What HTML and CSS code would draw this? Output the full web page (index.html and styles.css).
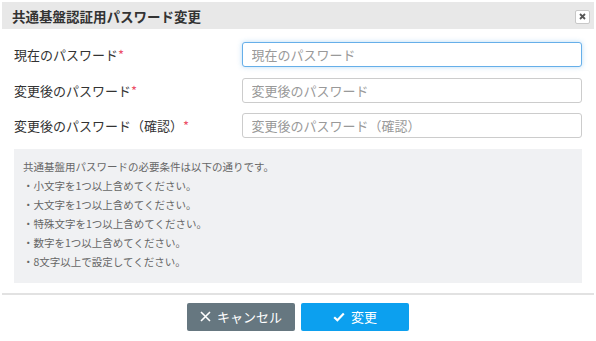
FILE: index.html
```html
<!DOCTYPE html>
<html lang="ja">
<head>
  <meta charset="UTF-8">
  <meta name="viewport" content="width=device-width, initial-scale=1.0">
  <title>共通基盤認証用パスワード変更</title>
  <link rel="stylesheet" href="styles.css">
</head>
<body>
  <div class="dialog">
    <div class="dialog-header">
      <span class="dialog-title">共通基盤認証用パスワード変更</span>
      <button class="close-button" type="button" title="閉じる">
        <svg width="7" height="7" viewBox="0 0 7 7"><path d="M1 1L6 6M6 1L1 6" stroke="#555" stroke-width="1.8"/></svg>
      </button>
    </div>
    <div class="dialog-body">
      <div class="form-row">
        <label for="currentPassword">現在のパスワード<span class="required">*</span></label>
        <input type="password" id="currentPassword" class="is-focus" placeholder="現在のパスワード" autofocus>
      </div>
      <div class="form-row">
        <label for="newPassword">変更後のパスワード<span class="required">*</span></label>
        <input type="password" id="newPassword" placeholder="変更後のパスワード">
      </div>
      <div class="form-row">
        <label for="confirmPassword">変更後のパスワード（確認）<span class="required">*</span></label>
        <input type="password" id="confirmPassword" placeholder="変更後のパスワード（確認）">
      </div>
      <div class="notice">
        <p>共通基盤用パスワードの必要条件は以下の通りです。</p>
        <p>・小文字を1つ以上含めてください。</p>
        <p>・大文字を1つ以上含めてください。</p>
        <p>・特殊文字を1つ以上含めてください。</p>
        <p>・数字を1つ以上含めてください。</p>
        <p>・8文字以上で設定してください。</p>
      </div>
    </div>
    <div class="dialog-footer">
      <button class="btn btn-cancel" type="button">
        <svg width="11" height="11" viewBox="0 0 11 11"><path d="M1 1L10 10M10 1L1 10" stroke="#fff" stroke-width="1.6"/></svg>
        キャンセル
      </button>
      <button class="btn btn-submit" type="button">
        <svg width="12" height="10" viewBox="0 0 12 10"><path d="M1.2 5.2L4.4 8.2L10.8 1.6" fill="none" stroke="#fff" stroke-width="2.2"/></svg>
        変更
      </button>
    </div>
  </div>
</body>
</html>
```

FILE: styles.css
```css
body {
  margin: 0;
  background-color: #fff;
  font-family: "Noto Sans CJK JP", "Noto Sans", sans-serif;
  color: #333;
}

.dialog {
  width: 596px;
  height: 341px;
  padding: 2px;
  box-sizing: border-box;
}

.dialog-header {
  display: flex;
  align-items: center;
  justify-content: space-between;
  height: 27px;
  padding: 0 4px 0 10px;
  background-color: #e8e8e8;
}

.dialog-title {
  font-size: 13.5px;
  font-weight: bold;
  color: #333;
}

.close-button {
  display: flex;
  align-items: center;
  justify-content: center;
  width: 15px;
  height: 14px;
  padding: 0;
  margin-top: 2px;
  border: 1px solid #c8c8c8;
  border-radius: 2px;
  background-color: #fff;
  cursor: pointer;
}

.dialog-body {
  padding: 13px 12px 0 12px;
}

.form-row {
  display: flex;
  align-items: center;
  height: 25px;
  margin-bottom: 10.5px;
}

.form-row label {
  width: 228px;
  font-size: 13px;
  color: #333;
}

.required {
  color: #ec5068;
}

.form-row input {
  width: 341px;
  height: 25px;
  box-sizing: border-box;
  padding: 0 9px;
  font-family: inherit;
  font-size: 13px;
  color: #333;
  border: 1px solid #ccc;
  border-radius: 3px;
  outline: none;
}

.form-row input::placeholder {
  color: #999;
}

.form-row input.is-focus {
  border-color: #66afe9;
  box-shadow: 0 0 5px rgba(102, 175, 233, 0.45);
}

.notice {
  margin-top: 1.5px;
  padding: 8px 9px 12px 9px;
  background-color: #f0f1f3;
  font-size: 10.5px;
  line-height: 19px;
  color: #666;
}

.notice p {
  margin: 0;
}

.dialog-footer {
  display: flex;
  justify-content: center;
  gap: 6px;
  margin-top: 10px;
  padding-top: 8px;
  border-top: 2px solid #e2e2e2;
}

.btn {
  display: flex;
  align-items: center;
  justify-content: center;
  gap: 6px;
  width: 108px;
  height: 28px;
  border: none;
  border-radius: 2px;
  font-family: inherit;
  font-size: 13px;
  color: #fff;
  cursor: pointer;
}

.btn-cancel {
  background-color: #667780;
}

.btn-submit {
  background-color: #0ca0ef;
}
```
